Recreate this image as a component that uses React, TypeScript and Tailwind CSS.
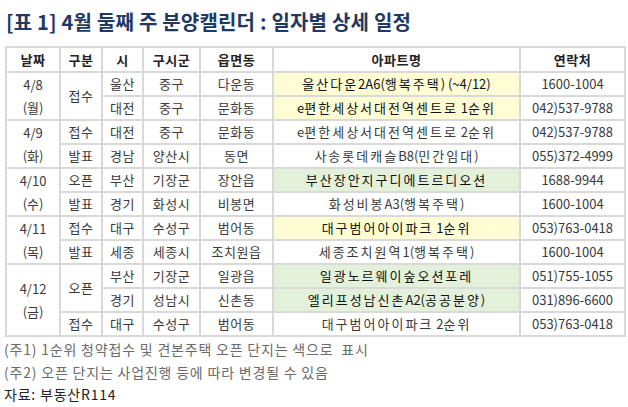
import React from "react";

type Row = {
  date?: { label: string; day: string; span: number };
  kind?: { label: string; span: number };
  si: string;
  gu: string;
  dong: string;
  apt: string;
  tone?: "yellow" | "green";
  tel: string;
};

const rows: Row[] = [
  { date: { label: "4/8", day: "(월)", span: 2 }, kind: { label: "접수", span: 2 }, si: "울산", gu: "중구", dong: "다운동", apt: "울산다운2A6(행복주택) (~4/12)", tone: "yellow", tel: "1600-1004" },
  { si: "대전", gu: "중구", dong: "문화동", apt: "e편한세상서대전역센트로 1순위", tone: "yellow", tel: "042)537-9788" },
  { date: { label: "4/9", day: "(화)", span: 2 }, kind: { label: "접수", span: 1 }, si: "대전", gu: "중구", dong: "문화동", apt: "e편한세상서대전역센트로 2순위", tel: "042)537-9788" },
  { kind: { label: "발표", span: 1 }, si: "경남", gu: "양산시", dong: "동면", apt: "사송롯데캐슬B8(민간임대)", tel: "055)372-4999" },
  { date: { label: "4/10", day: "(수)", span: 2 }, kind: { label: "오픈", span: 1 }, si: "부산", gu: "기장군", dong: "장안읍", apt: "부산장안지구디에트르디오션", tone: "green", tel: "1688-9944" },
  { kind: { label: "발표", span: 1 }, si: "경기", gu: "화성시", dong: "비봉면", apt: "화성비봉A3(행복주택)", tel: "1600-1004" },
  { date: { label: "4/11", day: "(목)", span: 2 }, kind: { label: "접수", span: 1 }, si: "대구", gu: "수성구", dong: "범어동", apt: "대구범어아이파크 1순위", tone: "yellow", tel: "053)763-0418" },
  { kind: { label: "발표", span: 1 }, si: "세종", gu: "세종시", dong: "조치원읍", apt: "세종조치원역1(행복주택)", tel: "1600-1004" },
  { date: { label: "4/12", day: "(금)", span: 3 }, kind: { label: "오픈", span: 2 }, si: "부산", gu: "기장군", dong: "일광읍", apt: "일광노르웨이숲오션포레", tone: "green", tel: "051)755-1055" },
  { si: "경기", gu: "성남시", dong: "신촌동", apt: "엘리프성남신촌A2(공공분양)", tone: "green", tel: "031)896-6600" },
  { kind: { label: "접수", span: 1 }, si: "대구", gu: "수성구", dong: "범어동", apt: "대구범어아이파크 2순위", tel: "053)763-0418" },
];

const headers = ["날짜", "구분", "시", "구시군", "읍면동", "아파트명", "연락처"];
const widths = ["w-[54px]", "w-[42px]", "w-[41px]", "w-[57px]", "w-[73px]", "w-[247px]", "w-[105px]"];

const cell = "border-2 border-[#d9d9d9] text-center align-middle p-0";

// Korean runs get the wide spacing of the source sheet, Latin runs stay tight
function AptName({ text }: { text: string }) {
  const parts = text.match(/[가-힣]+|[^가-힣]+/g) ?? [];
  return (
    <>
      {parts.map((p, i) =>
        /[가-힣]/.test(p) ? (
          <span key={i} className="tracking-[2px]">{p}</span>
        ) : (
          <span key={i} className="tracking-normal">{p}</span>
        )
      )}
    </>
  );
}

export default function App() {
  return (
    <div className="w-[628px] h-[407px] bg-white text-[#3a3a3a] overflow-hidden" style={{ fontFamily: '"Noto Sans CJK KR", "Noto Sans", sans-serif' }}>
      <div className="h-[46px] pl-[6px] flex items-center pb-[2px]">
        <h1 className="text-[20px] font-bold text-[#1f3864] tracking-[0.2px]">[표 1] 4월 둘째 주 분양캘린더 : 일자별 상세 일정</h1>
      </div>
      <table className="ml-[5px] w-[620px] table-fixed border-collapse text-[13px] leading-[20px]">
        <colgroup>
          {widths.map((w, i) => (
            <col key={i} className={w} />
          ))}
        </colgroup>
        <thead>
          <tr className="h-[25px]">
            {headers.map((h) => (
              <th key={h} className={`${cell} font-bold text-[#222] tracking-[0.5px]`}>{h}</th>
            ))}
          </tr>
        </thead>
        <tbody>
          {rows.map((r, i) => (
            <tr key={i} className="h-[24px]">
              {r.date && (
                <td rowSpan={r.date.span} className={`${cell} leading-[23px]`}>
                  <div>{r.date.label}</div>
                  <div>{r.date.day}</div>
                </td>
              )}
              {r.kind && (
                <td rowSpan={r.kind.span} className={`${cell} tracking-[0.5px]`}>{r.kind.label}</td>
              )}
              <td className={`${cell} tracking-[0.5px]`}>{r.si}</td>
              <td className={`${cell} tracking-[0.5px]`}>{r.gu}</td>
              <td className={`${cell} tracking-[0.5px]`}>{r.dong}</td>
              <td
                className={`${cell} whitespace-nowrap ${
                  r.tone === "yellow" ? "bg-[#fffdd3] text-[#111]" : r.tone === "green" ? "bg-[#e3f0da] text-[#111]" : ""
                }`}
              >
                <AptName text={r.apt} />
              </td>
              <td className={cell}>{r.tel}</td>
            </tr>
          ))}
        </tbody>
      </table>
      <div className="pl-[4px] pt-[1px] text-[14px] leading-[22.5px] tracking-[0.8px]">
        <p className="text-[#6b6b6b]">(주1) 1순위 청약접수 및 견본주택 오픈 단지는 색으로&nbsp;&nbsp;표시</p>
        <p className="text-[#6b6b6b]">(주2) 오픈 단지는 사업진행 등에 따라 변경될 수 있음</p>
        <p className="text-[#222]">자료: 부동산R114</p>
      </div>
    </div>
  );
}
